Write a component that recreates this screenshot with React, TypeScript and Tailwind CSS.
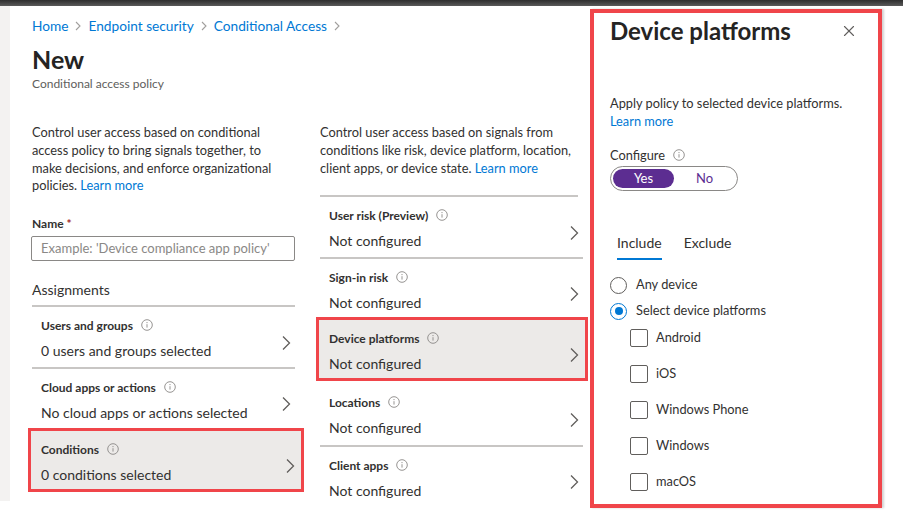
import { X } from "lucide-react"

const font = { fontFamily: "Lato, 'Noto Sans', sans-serif" }

function Info() {
  return (
    <svg width="12" height="12" viewBox="0 0 12 12" className="inline-block ml-[8px] align-[-1px]">
      <circle cx="6" cy="6" r="5.3" fill="none" stroke="#8a8886" strokeWidth="0.9" />
      <line x1="6" y1="5.2" x2="6" y2="8.6" stroke="#8a8886" strokeWidth="0.9" />
      <circle cx="6" cy="3.6" r="0.6" fill="#8a8886" />
    </svg>
  )
}

function Chevron() {
  return (
    <svg width="10" height="16" viewBox="0 0 10 16" className="shrink-0 self-center">
      <path d="M2 1.5 L8.5 8 L2 14.5" fill="none" stroke="#605e5c" strokeWidth="1.3" />
    </svg>
  )
}

function Crumb() {
  return (
    <svg width="6" height="10" viewBox="0 0 6 10">
      <path d="M1 1 L5 5 L1 9" fill="none" stroke="#a19f9d" strokeWidth="1.1" />
    </svg>
  )
}

function Row({
  title,
  value,
  box = "",
  divider = false,
  h = "h-[59px] pt-[11px]",
}: {
  title: string
  value: string
  box?: string
  divider?: boolean
  h?: string
}) {
  const cls = box
    ? box + " h-[64px] border-[3px] border-[#f0454a] bg-[#eceae8] flex pl-[10px] pr-[6px] pt-[11px]"
    : h + " flex pl-[9px] pr-[4px] " + (divider ? "border-b-2 border-[#c8c6c4]" : "")
  return (
    <div className={cls}>
      <div className="flex-1 flex flex-col">
        <div className="text-[12px] font-bold text-[#323130] leading-[16px]">
          {title}
          <Info />
        </div>
        <div className="mt-[8px] text-[14px] text-[#323130] leading-[18px]">{value}</div>
      </div>
      <Chevron />
    </div>
  )
}

function Checkbox({ label }: { label: string }) {
  return (
    <div className="flex items-center gap-[8px] h-[36px]">
      <div className="w-[18px] h-[18px] border border-[#605e5c] rounded-[2px] bg-white" />
      <span className="text-[12.8px] text-[#323130]">{label}</span>
    </div>
  )
}

export default function App() {
  return (
    <div className="w-[903px] h-[511px] bg-white overflow-hidden flex flex-col" style={font}>
      <div className="h-[6px] bg-gradient-to-b from-[#2e2e2e] to-[#5a5a5a] shrink-0" />
      <div className="flex flex-1 min-h-0">
        <div className="w-[10px] bg-[#f3f2f1] h-[495px] shrink-0" />
        <div className="w-[580px] pl-[22px] shrink-0">
          <div className="mt-[11px] flex items-center text-[13.7px] text-[#0078d4] gap-[7px] h-[18px]">
            <span>Home</span>
            <Crumb />
            <span>Endpoint security</span>
            <Crumb />
            <span>Conditional Access</span>
            <Crumb />
          </div>
          <div className="mt-[9px] text-[25px] font-bold text-[#252423] leading-[30px]">New</div>
          <div className="mt-[2px] text-[12px] text-[#605e5c] leading-[16px]">Conditional access policy</div>

          <div className="mt-[32px] grid grid-cols-[263px_263px] gap-x-[25px]">
            <div className="flex flex-col">
              <p className="w-[248px] text-[12.8px] leading-[17.8px] text-[#323130]">
                Control user access based on conditional access policy to bring signals together, to make
                decisions, and enforce organizational policies. <a className="text-[#0078d4]">Learn more</a>
              </p>
              <div className="mt-[21px] text-[12px] font-bold text-[#323130] leading-[16px]">
                Name <span className="text-[#a4262c]">*</span>
              </div>
              <div className="mt-[4px] -ml-[1px] h-[25px] border border-[#8a8886] rounded-[2px] flex items-center px-[9px] text-[13px] text-[#8a8886]">
                Example: 'Device compliance app policy'
              </div>
              <div className="mt-[20px] text-[14px] text-[#323130] leading-[18px] pb-[6px] border-b-2 border-[#c8c6c4]">
                Assignments
              </div>
              <Row title="Users and groups" value="0 users and groups selected" divider h="h-[62px] pt-[11px]" />
              <Row title="Cloud apps or actions" value="No cloud apps or actions selected" />
              <Row title="Conditions" value="0 conditions selected" box="-ml-[4px] -mr-[9px]" />
            </div>
            <div className="flex flex-col">
              <p className="w-[258px] text-[12.8px] leading-[17.8px] text-[#323130] pb-[18px] border-b-2 border-[#c8c6c4]">
                Control user access based on signals from conditions like risk, device platform, location,
                client apps, or device state. <a className="text-[#0078d4]">Learn more</a>
              </p>
              <Row title="User risk (Preview)" value="Not configured" divider h="h-[62px] pt-[11px]" />
              <Row title="Sign-in risk" value="Not configured" h="h-[58px] pt-[11px]" />
              <Row title="Device platforms" value="Not configured" box="-ml-[4px] -mr-[5px]" />
              <Row title="Locations" value="Not configured" divider h="h-[66px] pt-[14px]" />
              <Row title="Client apps" value="Not configured" />
            </div>
          </div>
        </div>

        <div className="mt-[3px] w-[292px] h-[499px] border-4 border-[#f0454a] shadow-[2px_0_2px_rgba(0,0,0,0.18)] pl-[16px] pr-[20px] shrink-0">
          <div className="flex items-center justify-between mt-[3px] h-[30px]">
            <span className="text-[24px] font-bold text-[#252423]">Device platforms</span>
            <X size={18} strokeWidth={1.5} color="#605e5c" />
          </div>
          <p className="mt-[48px] text-[12.8px] leading-[18px] text-[#323130]">
            Apply policy to selected device platforms.
            <br />
            <a className="text-[#0078d4]">Learn more</a>
          </p>
          <div className="mt-[17px] text-[12.8px] text-[#323130] leading-[16px]">
            Configure
            <Info />
          </div>
          <div className="mt-[3px] w-[128px] h-[25px] border border-[#8a8886] rounded-full flex items-center p-[2px]">
            <div className="w-[61px] h-full rounded-full bg-[#5c2d91] text-white text-[13px] flex items-center justify-center">
              Yes
            </div>
            <div className="flex-1 text-[#5c2d91] text-[13px] text-center">No</div>
          </div>
          <div className="mt-[43px] ml-[7px] flex gap-[22px] text-[14px] text-[#323130] leading-[18px]">
            <div className="flex flex-col items-center">
              <span>Include</span>
              <div className="mt-[6px] h-[2px] w-full bg-[#0078d4]" />
            </div>
            <span>Exclude</span>
          </div>
          <div className="mt-[15px] flex items-center gap-[9px] h-[20px]">
            <div className="w-[17px] h-[17px] rounded-full border border-[#605e5c]" />
            <span className="text-[12.8px] text-[#323130]">Any device</span>
          </div>
          <div className="mt-[6px] flex items-center gap-[9px] h-[20px]">
            <div className="w-[17px] h-[17px] rounded-full border border-[#0078d4] flex items-center justify-center">
              <div className="w-[8px] h-[8px] rounded-full bg-[#0078d4]" />
            </div>
            <span className="text-[12.8px] text-[#323130]">Select device platforms</span>
          </div>
          <div className="ml-[20px] mt-[-1px] flex flex-col">
            <Checkbox label="Android" />
            <Checkbox label="iOS" />
            <Checkbox label="Windows Phone" />
            <Checkbox label="Windows" />
            <Checkbox label="macOS" />
          </div>
        </div>
      </div>
    </div>
  )
}
